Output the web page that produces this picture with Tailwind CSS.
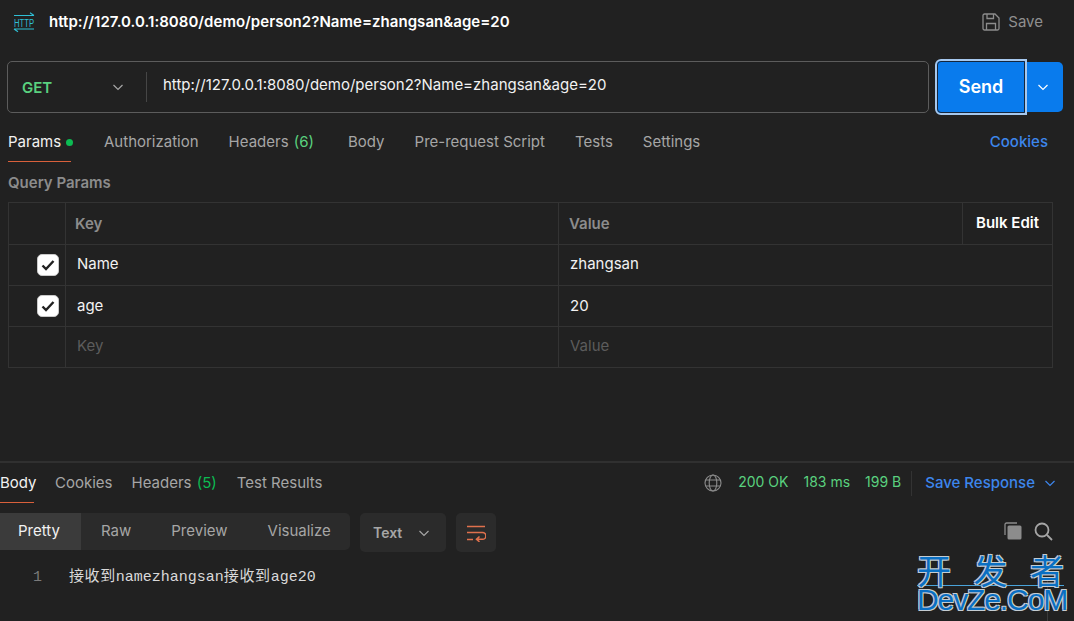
<!DOCTYPE html>
<html lang="en">
  <head>
    <meta charset="UTF-8" />
    <title>Postman</title>
    <script src="https://cdn.jsdelivr.net/npm/@tailwindcss/browser@4"></script>
  </head>
  <body class="bg-[#212121]">
    <div class="relative w-[1074px] h-[621px] overflow-hidden bg-[#212121] text-[15px] text-[#a6a6a6] font-['Inter','Noto_Sans_CJK_SC',sans-serif]">
      <!-- title bar -->
      <div class="flex items-center h-[45px] pl-[13px] pr-[31px]">
        <svg class="w-[22px] h-[22px] overflow-visible" viewBox="0 0 22 22" fill="none" stroke="#2fbfd4" stroke-width="1.100">
          <path d="M1 3.500h20M21 3.500l-4-2.700M1 17h20M1 17l4 2.700" />
          <text x="1" y="14.500" font-size="10" font-family="Liberation Sans" fill="#2fbfd4" stroke="none" textLength="20" lengthAdjust="spacingAndGlyphs">HTTP</text>
        </svg>
        <div class="ml-[14px] font-semibold tracking-[0.04px] text-white">http://127.0.0.1:8080/demo/person2?Name=zhangsan&amp;age=20</div>
        <div class="ml-auto flex items-center gap-[8px] text-[#8f8f8f] -mt-px">
          <svg class="w-[18px] h-[18px]" viewBox="0 0 18 18" fill="none" stroke="#8c8c8c" stroke-width="1.300">
            <path d="M1 2.500a1.500 1.500 0 0 1 1.500-1.500h10.500l4 4v10.500a1.500 1.500 0 0 1-1.500 1.500h-13a1.500 1.500 0 0 1-1.500-1.500z" />
            <path d="M5 1v4.500h6.500V1M4.500 17v-6.500h9V17" />
          </svg>
          <span>Save</span>
        </div>
      </div>

      <!-- request bar -->
      <div class="flex items-start mt-[16px] pl-[7px]">
        <div class="flex items-center w-[922px] h-[52px] rounded-[5px] border border-[#5c5c5c]">
          <div class="flex items-center w-[139px] h-[30px] border-r border-[#464646] pl-[14px] pr-[22px]">
            <span class="font-semibold text-[#5ad17f] mt-[2px]">GET</span>
            <svg class="ml-auto w-[12px] h-[12px]" viewBox="0 0 12 12" fill="none" stroke="#a6a6a6" stroke-width="1.200"><path d="M1.500 4l4.500 4.500L10.500 4" /></svg>
          </div>
          <div class="pl-[16px] text-[#f2f2f2] -mt-[3px]">http://127.0.0.1:8080/demo/person2?Name=zhangsan&amp;age=20</div>
        </div>
        <button class="flex items-center justify-center w-[92px] h-[56px] ml-[6px] -mt-[2px] rounded-l-[6px] bg-[#097bed] border-[2px] border-[#a6c8ee] outline-[1px] outline-[#14263d] outline-offset-[-3px] text-[18px] leading-none font-semibold text-white">Send</button>
        <div class="flex items-center justify-center w-[36px] h-[50px] mt-px pr-[4px] rounded-r-[5px] bg-[#097bed]">
          <svg class="w-[12px] h-[12px]" viewBox="0 0 12 12" fill="none" stroke="#fff" stroke-width="1.200"><path d="M1.500 4l4.500 4.500L10.500 4" /></svg>
        </div>
      </div>

      <!-- request tabs -->
      <div class="flex h-[39px] mt-[7px] pl-[8px] pr-[26px]">
        <div class="flex items-start w-[63px] h-[40px] pt-[10px] border-b border-[#d9603b] text-[#f2f2f2] leading-[20px] gap-[5px]">Params<span class="shrink-0 w-[7px] h-[7px] mt-[7px] rounded-full bg-[#0cbb52]"></span></div>
        <div class="flex gap-[30px] ml-[33px] pt-[10px] leading-[20px]">
          <span>Authorization</span>
          <span>Headers <span class="text-[#5ad17f] ml-[1px]">(6)</span></span>
          <span class="ml-[4px]">Body</span>
          <span>Pre-request Script</span>
          <span>Tests</span>
          <span>Settings</span>
        </div>
        <div class="ml-auto pt-[10px] leading-[20px] font-medium text-[#3d86ec]">Cookies</div>
      </div>

      <div class="pl-[8px] mt-[12px] font-semibold text-[#8c8c8c] leading-[20px]">Query Params</div>

      <!-- params table -->
      <div class="ml-[8px] mt-[9px] w-[1045px] border border-[#333333]">
        <div class="flex h-[42px] border-b border-[#333333] font-semibold text-[#8c8c8c]">
          <div class="w-[57px] border-r border-[#333333]"></div>
          <div class="w-[493px] border-r border-[#333333] pl-[9px] pt-[10px]">Key</div>
          <div class="w-[404px] border-r border-[#333333] pl-[10px] pt-[10px]">Value</div>
          <div class="flex-1 pl-[13px] pt-[9px] text-white">Bulk Edit</div>
        </div>
        <div class="flex h-[41px] border-b border-[#333333] text-[#f2f2f2]">
          <div class="flex items-center justify-end w-[57px] pr-[6px] border-r border-[#333333]">
            <div class="flex items-center justify-center w-[22px] h-[22px] rounded-[5px] bg-white border border-[#c9c9c9]">
              <svg class="w-[14px] h-[14px]" viewBox="0 0 14 14" fill="none" stroke="#212121" stroke-width="2.400"><path d="M1.500 7.500l3.500 3.500L12.500 3" /></svg>
            </div>
          </div>
          <div class="w-[493px] border-r border-[#333333] pl-[11px] pt-[8px]">Name</div>
          <div class="flex-1 pl-[11px] pt-[8px]">zhangsan</div>
        </div>
        <div class="flex h-[41px] border-b border-[#333333] text-[#f2f2f2]">
          <div class="flex items-center justify-end w-[57px] pr-[6px] border-r border-[#333333]">
            <div class="flex items-center justify-center w-[22px] h-[22px] rounded-[5px] bg-white border border-[#c9c9c9]">
              <svg class="w-[14px] h-[14px]" viewBox="0 0 14 14" fill="none" stroke="#212121" stroke-width="2.400"><path d="M1.500 7.500l3.500 3.500L12.500 3" /></svg>
            </div>
          </div>
          <div class="w-[493px] border-r border-[#333333] pl-[11px] pt-[9px]">age</div>
          <div class="flex-1 pl-[11px] pt-[9px]">20</div>
        </div>
        <div class="flex h-[40px] text-[#5c5c5c]">
          <div class="w-[57px] border-r border-[#333333]"></div>
          <div class="w-[493px] border-r border-[#333333] pl-[11px] pt-[8px]">Key</div>
          <div class="flex-1 pl-[11px] pt-[8px]">Value</div>
        </div>
      </div>

      <!-- response -->
      <div class="mt-[93px] border-t-2 border-[#303030]">
        <div class="flex h-[39px]">
          <div class="h-[40px] pt-[10px] w-[34px] leading-[20px] text-[#f2f2f2] border-b border-[#d9603b]">Body</div>
          <div class="flex gap-[20px] ml-[21px] pt-[10px] leading-[20px]">
            <span>Cookies</span>
            <span class="-ml-px">Headers <span class="text-[#0cbb52] ml-[1px]">(5)</span></span>
            <span>Test Results</span>
          </div>
          <div class="ml-auto flex items-start pt-[8px] pr-[18px]">
            <svg class="w-[18px] h-[18px] mt-[3px]" viewBox="0 0 18 18" fill="none" stroke="#8c8c8c" stroke-width="1.100">
              <circle cx="9" cy="9" r="8" />
              <ellipse cx="9" cy="9" rx="3.800" ry="8" />
              <path d="M1.800 6h14.400M1.800 12h14.400" />
            </svg>
            <div class="flex gap-[15px] ml-[16px] mt-[1px] leading-[20px] text-[14px] text-[#5ad17f]">
              <span>200 OK</span><span>183 ms</span><span>199 B</span>
            </div>
            <div class="w-px h-[25px] ml-[10px] bg-[#333333]"></div>
            <span class="ml-[13px] mt-[2px] leading-[20px] font-medium text-[#3d86ec]">Save Response</span>
            <svg class="w-[12px] h-[12px] ml-[9px] mt-[6px]" viewBox="0 0 12 12" fill="none" stroke="#3d86ec" stroke-width="1.200"><path d="M1.500 4l4.500 4.500L10.500 4" /></svg>
          </div>
        </div>

        <div class="flex items-start h-[39px] mt-[11px]">
          <div class="flex items-center h-[37px] w-[350px] rounded-r-[5px] bg-[#2b2b2b]">
            <div class="flex items-center h-full w-[81px] pl-[18px] bg-[#3b3b3b] text-[#f2f2f2]">Pretty</div>
            <span class="ml-[20px]">Raw</span>
            <span class="ml-[40px]">Preview</span>
            <span class="ml-[40px]">Visualize</span>
          </div>
          <div class="flex items-center w-[86px] h-[39px] ml-[10px] rounded-[5px] bg-[#2b2b2b] pl-[13px] pr-[16px] font-semibold text-[14px] text-[#a6a6a6]">
            <span class="-mt-px">Text</span>
            <svg class="ml-auto w-[12px] h-[12px]" viewBox="0 0 12 12" fill="none" stroke="#a6a6a6" stroke-width="1.200"><path d="M1.500 4l4.500 4.500L10.500 4" /></svg>
          </div>
          <div class="flex items-center justify-center w-[40px] h-[39px] ml-[10px] rounded-[5px] bg-[#2b2b2b]">
            <svg class="w-[20px] h-[18px]" viewBox="0 0 20 18" fill="none" stroke="#e0714d" stroke-width="1.600">
              <path d="M1 2.500h18M1 8.500h15.500a3.200 3.200 0 0 1 0 6.800H11M13.500 12.500l-3 2.800 3 2.500M1 15.500h6" />
            </svg>
          </div>
          <div class="ml-auto flex items-center gap-[12px] h-[36px] pr-[21px]">
            <svg class="w-[18px] h-[18px]" viewBox="0 0 18 18">
              <path d="M1 13V2.500A1.500 1.500 0 0 1 2.500 1H13" fill="none" stroke="#8c8c8c" stroke-width="1.300" />
              <rect x="3.500" y="3.500" width="14" height="14" rx="1.500" fill="#8c8c8c" />
            </svg>
            <svg class="w-[19px] h-[19px]" viewBox="0 0 19 19" fill="none" stroke="#a6a6a6" stroke-width="1.800">
              <circle cx="8" cy="8" r="6.500" /><path d="M13 13l5 5" />
            </svg>
          </div>
        </div>

        <div class="flex items-center mt-[16px] text-[15px] leading-[20px] font-['Liberation_Mono','Noto_Sans_CJK_SC',monospace]">
          <span class="w-[43px] pr-[1px] text-right text-[#7a7a7a]">1</span>
          <span class="ml-[26px] text-[#d9d9d9]"><span class="tracking-[0.6px]">接收到</span>namezhangsan<span class="tracking-[0.6px]">接收到</span>age20</span>
        </div>
      </div>

      <!-- site watermark -->
      <div class="absolute left-[1047px] top-[578px] w-px h-[43px] bg-[#3a3a3a]"></div>
      <div class="absolute left-[917px] top-[553px] w-[147px] text-[#0a6fc2] font-['Noto_Sans_CJK_SC',sans-serif] [text-shadow:1px_1px_0_#c4ccd2,-1px_-1px_0_#c4ccd2,1px_-1px_0_#c4ccd2,-1px_1px_0_#c4ccd2]">
        <div class="flex justify-between h-[33px] text-[34px] leading-[34px] border-b border-[#4aa3d9]"><span>开</span><span>发</span><span>者</span></div>
        <div class="text-[30px] leading-[28px] tracking-[-1.1px] whitespace-nowrap font-['Liberation_Sans',sans-serif]">DevZe.CoM</div>
      </div>
    </div>
  </body>
</html>
